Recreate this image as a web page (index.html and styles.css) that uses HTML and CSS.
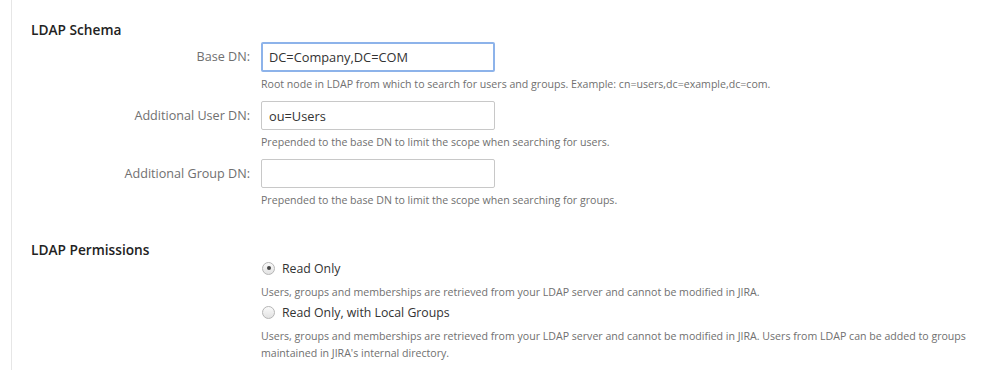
FILE: index.html
```html
<!DOCTYPE html>
<html lang="en">
<head>
<meta charset="utf-8">
<title>LDAP</title>
<link rel="stylesheet" href="styles.css">
</head>
<body>
<div class="page">
    <h3 class="section-title">LDAP Schema</h3>
    <div class="field">
        <label class="field-label">Base DN:</label>
        <div class="field-body">
            <input type="text" class="text focused" value="DC=Company,DC=COM">
            <div class="help">Root node in LDAP from which to search for users and groups. Example: cn=users,dc=example,dc=com.</div>
        </div>
    </div>
    <div class="field">
        <label class="field-label">Additional User DN:</label>
        <div class="field-body">
            <input type="text" class="text" value="ou=Users">
            <div class="help">Prepended to the base DN to limit the scope when searching for users.</div>
        </div>
    </div>
    <div class="field">
        <label class="field-label">Additional Group DN:</label>
        <div class="field-body">
            <input type="text" class="text" value="">
            <div class="help">Prepended to the base DN to limit the scope when searching for groups.</div>
        </div>
    </div>

    <h3 class="section-title perms">LDAP Permissions</h3>
    <div class="radios">
        <div class="radio">
            <span class="radio-dot checked"></span>
            <span class="radio-label">Read Only</span>
        </div>
        <div class="help">Users, groups and memberships are retrieved from your LDAP server and cannot be modified in JIRA.</div>
        <div class="radio">
            <span class="radio-dot"></span>
            <span class="radio-label">Read Only, with Local Groups</span>
        </div>
        <div class="help">Users, groups and memberships are retrieved from your LDAP server and cannot be modified in JIRA. Users from LDAP can be added to groups maintained in JIRA's internal directory.</div>
    </div>
</div>
</body>
</html>
```

FILE: styles.css
```css
body {
    margin: 0;
    background: #fff;
    font-family: "Open Sans", "Noto Sans", sans-serif;
    color: #333;
}

.page {
    margin-left: 11px;
    border-left: 1px solid #e6e6e6;
    padding: 21px 0 0 19px;
    height: 349px;
}

.section-title {
    margin: 0 0 3px 0;
    font-size: 13.7px;
    font-weight: 600;
    color: #222;
    line-height: 18px;
}

.section-title.perms {
    margin-top: 32px;
    margin-bottom: 0;
}

.field {
    display: flex;
    align-items: flex-start;
    margin-bottom: 8px;
}

.field-label {
    width: 219px;
    text-align: right;
    padding-top: 5px;
    font-size: 12.6px;
    line-height: 20px;
    color: #707070;
}

.field-body {
    margin-left: 11px;
}

.text {
    display: block;
    box-sizing: border-box;
    width: 234px;
    height: 29px;
    margin: 0;
    padding: 0 7px;
    border: 1px solid #c8c8c8;
    border-radius: 2px;
    font-family: inherit;
    font-size: 12.8px;
    color: #333;
}

.text.focused {
    height: 30px;
    border: 2px solid #8db3ea;
    padding: 0 6px;
}

.help {
    font-size: 10.6px;
    line-height: 17px;
    color: #707070;
    margin-top: 4px;
}

.radios {
    margin-left: 230px;
}

.radios .help {
    margin: 7px 0 2px 0;
    max-width: 726px;
}

.radio {
    display: flex;
    align-items: center;
    height: 18px;
}

.radio-dot {
    box-sizing: border-box;
    width: 13px;
    height: 13px;
    border-radius: 50%;
    border: 1px solid #b5b5b5;
    background: linear-gradient(#fafafa, #e2e2e2);
    margin-right: 7px;
    margin-left: 1px;
    position: relative;
}

.radio-dot.checked::after {
    content: "";
    position: absolute;
    left: 3.5px;
    top: 3.5px;
    width: 4px;
    height: 4px;
    border-radius: 50%;
    background: #444;
}

.radio-label {
    font-size: 12.3px;
    color: #333;
}
```
